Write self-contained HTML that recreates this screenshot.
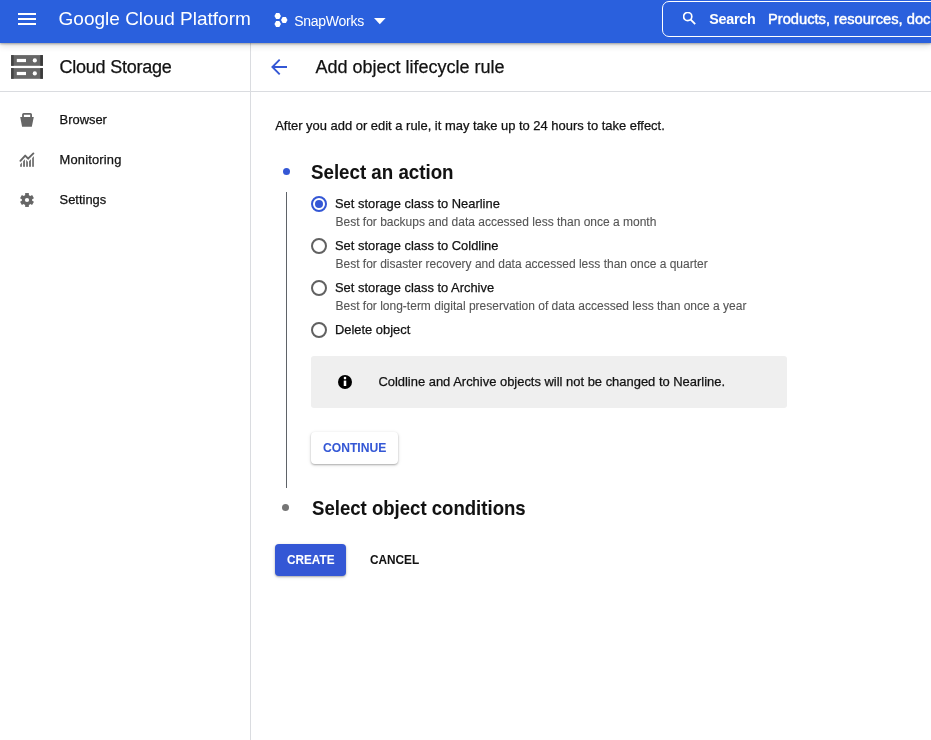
<!DOCTYPE html>
<html>
<head>
<meta charset="utf-8">
<style>
*{margin:0;padding:0;box-sizing:border-box}
html,body{width:931px;height:740px;overflow:hidden;background:#fff}
body{position:relative;will-change:transform;font-family:"Liberation Sans",sans-serif;color:#121212}
.a{position:absolute;white-space:nowrap}
.t{position:absolute;white-space:nowrap;line-height:1;-webkit-text-stroke:0.25px currentColor}
#hdr{position:absolute;left:0;top:0;width:931px;height:43px;background:#2a60dd;box-shadow:0 1px 2px rgba(0,0,0,.3),0 2px 7px rgba(0,0,0,.18);z-index:5}
.hb{position:absolute;left:18px;width:18px;height:2px;background:#fff}
#search{position:absolute;left:662px;top:1px;width:300px;height:36px;border:1.5px solid #fff;border-radius:7px}
.hr{position:absolute;background:#dadce0}
.nav{font-size:12.9px;color:#121212}
.radio{position:absolute;left:311px;width:16px;height:16px;border:2px solid #616161;border-radius:50%}
.radio.on{border-color:#3457d5}
.radio.on::after{content:"";position:absolute;left:2px;top:2px;width:8px;height:8px;border-radius:50%;background:#3457d5}
.lbl{font-size:12.9px;color:#121212}
.desc{font-size:12px;color:#555;-webkit-text-stroke:0.1px #555}
.btn{position:absolute;border-radius:4px}
</style>
</head>
<body>
<div id="hdr">
  <div class="hb" style="top:13px"></div>
  <div class="hb" style="top:18px"></div>
  <div class="hb" style="top:23px"></div>
  <div class="t" style="left:58.6px;top:9.2px;font-size:19px;color:#fff;-webkit-text-stroke:0">Google Cloud Platform</div>
  <svg class="a" style="left:270px;top:8px" width="22" height="24" viewBox="0 0 22 24">
    <polygon fill="#fff" points="4.45,7.90 6.08,4.90 9.32,4.90 10.95,7.90 9.32,10.90 6.08,10.90"/>
    <polygon fill="#fff" points="4.45,16.00 6.08,13.00 9.32,13.00 10.95,16.00 9.32,19.00 6.08,19.00"/>
    <polygon fill="#fff" points="11.00,12.00 12.62,9.00 15.88,9.00 17.50,12.00 15.88,15.00 12.62,15.00"/>
  </svg>
  <div class="t" style="left:294.2px;top:13.6px;font-size:14px;letter-spacing:-0.27px;color:#fff;-webkit-text-stroke:0">SnapWorks</div>
  <svg class="a" style="left:374px;top:17.8px" width="12" height="7" viewBox="0 0 12 7"><polygon fill="#fff" points="0,0 11.6,0 5.8,6.2"/></svg>
  <div id="search">
    <svg class="a" style="left:20px;top:10px" width="14" height="14" viewBox="0 0 14 14">
      <circle cx="4.7" cy="4.6" r="4.1" fill="none" stroke="#fff" stroke-width="1.7"/>
      <line x1="7.5" y1="7.4" x2="12.2" y2="12.2" stroke="#fff" stroke-width="1.8"/>
    </svg>
  </div>
  <div class="t" style="left:709.2px;top:11.9px;font-size:14.3px;font-weight:700;-webkit-text-stroke:0.05px currentColor;letter-spacing:-0.25px;color:#fff">Search</div>
  <div class="t" style="left:768px;top:11.6px;font-size:14.7px;font-weight:400;-webkit-text-stroke:0.45px #fff;color:#fff">Products, resources, docs (/)</div>
</div>

<!-- sidebar -->
<svg class="a" style="left:11px;top:55px" width="32" height="24" viewBox="0 0 32 24">
  <rect x="0.1" y="0.1" width="31.8" height="10.7" fill="#676767"/>
  <rect x="0.1" y="13.1" width="31.8" height="10.7" fill="#676767"/>
  <rect x="0.1" y="0.1" width="2.6" height="10.7" fill="#454545"/>
  <rect x="29.3" y="0.1" width="2.6" height="10.7" fill="#3a3a3a"/>
  <rect x="0.1" y="13.1" width="2.6" height="10.7" fill="#454545"/>
  <rect x="29.3" y="13.1" width="2.6" height="10.7" fill="#3a3a3a"/>
  <rect x="5.8" y="3.9" width="9.2" height="3.2" fill="#fff"/>
  <circle cx="23.8" cy="5.4" r="2.1" fill="#fff"/>
  <rect x="5.8" y="16.9" width="9.2" height="3.2" fill="#fff"/>
  <circle cx="23.8" cy="18.4" r="2.1" fill="#fff"/>
</svg>
<div class="t" style="left:59.6px;top:57.8px;font-size:18px;letter-spacing:-0.25px;color:#121212">Cloud Storage</div>
<div class="hr" style="left:0;top:91px;width:931px;height:1px"></div>
<div class="hr" style="left:250px;top:43px;width:1px;height:697px"></div>

<svg class="a" style="left:19px;top:112px" width="16" height="16" viewBox="0 0 16 16">
  <path fill="#666" d="M1.2 5.1H14.8L12.8 14.8H3.1Z M3.1 5.3V2.6Q3.1 1 4.7 1H11.4Q13 1 13 2.6V5.3H11.2V2.8H4.9V5.3Z"/>
</svg>
<div class="t nav" style="left:59.6px;top:113.8px">Browser</div>
<svg class="a" style="left:14px;top:148px" width="26" height="24" viewBox="0 0 26 24">
  <defs><clipPath id="mc"><polygon points="0,24 0,22.5 6,16.5 11.2,11.0 14.1,14.1 19.6,8.6 26,2.2 26,24"/></clipPath></defs>
  <g fill="#666" clip-path="url(#mc)">
    <rect x="6.2" y="0" width="1.65" height="18.8"/>
    <rect x="9.15" y="0" width="1.75" height="18.8"/>
    <rect x="12.2" y="0" width="1.65" height="18.8"/>
    <rect x="15.1" y="0" width="1.8" height="18.8"/>
    <rect x="18.2" y="0" width="1.65" height="18.8"/>
  </g>
  <path fill="none" stroke="#666" stroke-width="1.9" stroke-linecap="round" stroke-linejoin="round" d="M6.4 12.8L11.2 7.6L14.1 10.7L19.4 5.4"/>
</svg>
<div class="t nav" style="left:59.6px;top:153.8px;letter-spacing:0.17px">Monitoring</div>
<svg class="a" style="left:14px;top:188px" width="26" height="24" viewBox="0 0 26 24">
  <g fill="#666">
    <circle cx="13" cy="12" r="5.2"/>
    <rect x="11.15" y="5.05" width="3.7" height="13.9"/>
    <rect x="11.15" y="5.05" width="3.7" height="13.9" transform="rotate(60 13 12)"/>
    <rect x="11.15" y="5.05" width="3.7" height="13.9" transform="rotate(-60 13 12)"/>
  </g>
  <circle cx="13" cy="12" r="2.1" fill="#fff"/>
</svg>
<div class="t nav" style="left:59.6px;top:193.8px">Settings</div>

<!-- main header -->
<svg class="a" style="left:271px;top:59px" width="16" height="16" viewBox="0 0 16 16">
  <path fill="none" stroke="#3457d5" stroke-width="1.9" d="M16 8H1.5M8.7 0.7L1.4 8L8.7 15.3"/>
</svg>
<div class="t" style="left:315.4px;top:57.7px;font-size:18px;color:#121212">Add object lifecycle rule</div>

<div class="t" style="left:275.2px;top:119.8px;font-size:12.94px;color:#121212">After you add or edit a rule, it may take up to 24 hours to take effect.</div>

<div class="a" style="left:282.5px;top:167.8px;width:7px;height:7px;border-radius:50%;background:#3457d5"></div>
<div class="t" style="left:311.2px;top:162.4px;font-size:20.6px;font-weight:700;-webkit-text-stroke:0.05px currentColor;transform:scaleX(0.909);transform-origin:0 0;color:#121212">Select an action</div>
<div class="a" style="left:286px;top:192px;width:1px;height:296px;background:#5f6368"></div>

<div class="radio on" style="top:195.7px"></div>
<div class="t lbl" style="left:335px;top:197.7px">Set storage class to Nearline</div>
<div class="t desc" style="left:335.5px;top:215.8px">Best for backups and data accessed less than once a month</div>
<div class="radio" style="top:237.7px"></div>
<div class="t lbl" style="left:335px;top:239.7px">Set storage class to Coldline</div>
<div class="t desc" style="left:335.5px;top:257.8px">Best for disaster recovery and data accessed less than once a quarter</div>
<div class="radio" style="top:279.7px"></div>
<div class="t lbl" style="left:335px;top:281.7px">Set storage class to Archive</div>
<div class="t desc" style="left:335.5px;top:299.8px">Best for long-term digital preservation of data accessed less than once a year</div>
<div class="radio" style="top:321.7px"></div>
<div class="t lbl" style="left:335px;top:323.7px">Delete object</div>

<div class="a" style="left:311px;top:356px;width:476px;height:52px;border-radius:3px;background:#efefef"></div>
<svg class="a" style="left:338px;top:375px" width="14" height="14" viewBox="0 0 14 14">
  <circle cx="7" cy="7" r="7" fill="#000"/>
  <rect x="5.75" y="5.6" width="2.5" height="5.4" fill="#fff"/>
  <circle cx="7" cy="3.1" r="1.3" fill="#fff"/>
</svg>
<div class="t" style="left:378.4px;top:376.3px;font-size:12.94px;color:#121212">Coldline and Archive objects will not be changed to Nearline.</div>

<div class="btn" style="left:311px;top:432px;width:87px;height:32px;background:#fff;box-shadow:0 1px 2px rgba(0,0,0,.28),0 1px 4px rgba(0,0,0,.1)"></div>
<div class="t" style="left:323.1px;top:440.5px;font-size:13.3px;font-weight:700;-webkit-text-stroke:0.05px currentColor;transform:scaleX(0.912);transform-origin:0 0;color:#3457d5">CONTINUE</div>

<div class="a" style="left:282px;top:503.5px;width:7px;height:7px;border-radius:50%;background:#757575"></div>
<div class="t" style="left:311.6px;top:498.1px;font-size:20.6px;font-weight:700;-webkit-text-stroke:0.05px currentColor;transform:scaleX(0.902);transform-origin:0 0;color:#121212">Select object conditions</div>

<div class="btn" style="left:275px;top:544px;width:71px;height:32px;background:#3457d5;box-shadow:0 1px 2px rgba(0,0,0,.28),0 1px 4px rgba(0,0,0,.1)"></div>
<div class="t" style="left:287.3px;top:552.6px;font-size:13.3px;font-weight:700;-webkit-text-stroke:0.05px currentColor;transform:scaleX(0.885);transform-origin:0 0;color:#fff">CREATE</div>
<div class="t" style="left:370.2px;top:552.6px;font-size:13.3px;font-weight:700;-webkit-text-stroke:0.05px currentColor;transform:scaleX(0.888);transform-origin:0 0;color:#121212">CANCEL</div>
</body>
</html>
